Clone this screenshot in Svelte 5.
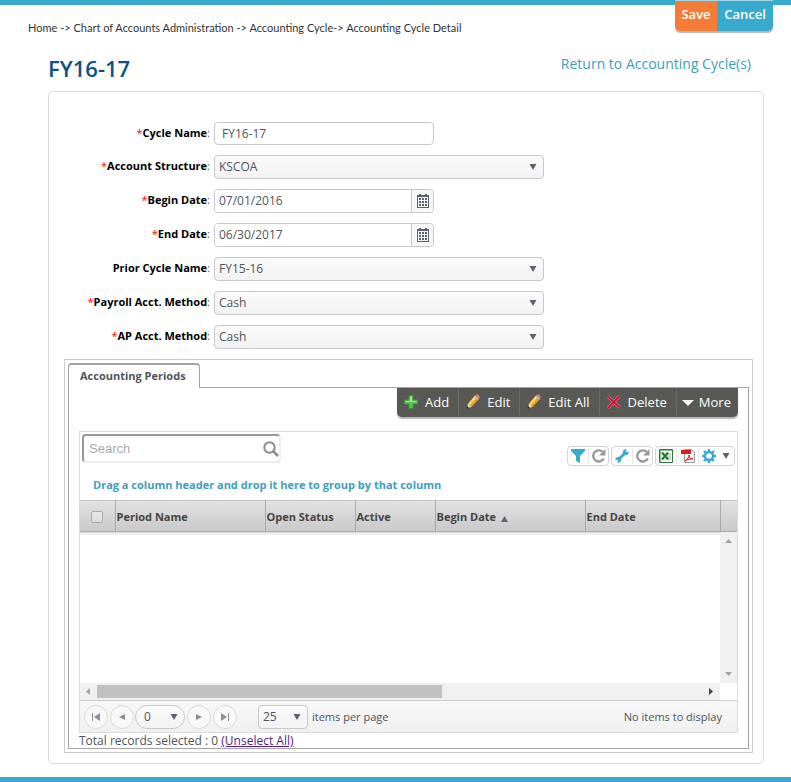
<script>
let search = $state("");
let selected = $state([]);

let cycle = $state({
  name: "FY16-17",
  structure: "KSCOA",
  begin: "07/01/2016",
  end: "06/30/2017",
  prior: "FY15-16",
  payroll: "Cash",
  ap: "Cash",
});

const fields = [
  { key: "name", label: "Cycle Name", type: "text", required: true },
  { key: "structure", label: "Account Structure", type: "select", required: true, options: ["KSCOA"] },
  { key: "begin", label: "Begin Date", type: "date", required: true },
  { key: "end", label: "End Date", type: "date", required: true },
  { key: "prior", label: "Prior Cycle Name", type: "select", required: false, options: ["FY15-16"] },
  { key: "payroll", label: "Payroll Acct. Method", type: "select", required: true, options: ["Cash", "Accrual"] },
  { key: "ap", label: "AP Acct. Method", type: "select", required: true, options: ["Cash", "Accrual"] },
];

const actions = [
  { name: "Add", icon: "plus" },
  { name: "Edit", icon: "pencil" },
  { name: "Edit All", icon: "pencil" },
  { name: "Delete", icon: "cross" },
  { name: "More", icon: "more" },
];

const columns = ["Period Name", "Open Status", "Active", "Begin Date", "End Date"];
</script>

{#snippet arrow()}
  <svg class="arrow" width="8" height="6" viewBox="0 0 8 6" aria-hidden="true">
    <path d="M0.5 0h7L4 6z" fill="#5b6271" />
  </svg>
{/snippet}

{#snippet actionIcon(name)}
  {#if name === "plus"}
    <svg width="16" height="16" viewBox="0 0 16 16" aria-hidden="true">
      <path d="M6 1.500h4V6h4.500v4H10v4.500H6V10H1.500V6H6z" fill="#5cc24f" stroke="#3c9c35" />
      <path d="M7 2.500h2V7h4.500v1H2.500V7H7z" fill="#a6e698" />
    </svg>
  {:else if name === "pencil"}
    <svg width="16" height="16" viewBox="0 0 16 16" aria-hidden="true">
      <path d="M2 14l1-4.500L6.500 13z" fill="#f7dfb4" />
      <path d="M3 9.500L9 2.500l4 3.500-6.500 7z" fill="#f0a020" />
      <path d="M3.500 9.500l6-7 1.500 1.500-6 7z" fill="#ffdf70" />
      <path d="M9 2.500l1-1.200 4 3.500-1 1.200z" fill="#c9ccd2" />
      <path d="M10 1.500l1-1h2l1.500 1.500v2L14 5z" fill="#e47a6c" />
      <path d="M1.500 14.500l.5-2.500L4 14z" fill="#222" />
    </svg>
  {:else if name === "cross"}
    <svg width="16" height="16" viewBox="0 0 16 16" aria-hidden="true">
      <path d="M2 2.500l11.500 11M13.500 2L2 14" stroke="#e9a5b2" stroke-width="3" fill="none" />
      <path d="M2 2.500l11.500 11M13.500 2L2 14" stroke="#d0122f" stroke-width="2" fill="none" />
    </svg>
  {:else}
    <svg width="12" height="16" viewBox="0 0 12 16" aria-hidden="true">
      <path d="M0 6h12L6 12z" fill="#fff" />
    </svg>
  {/if}
{/snippet}

{#snippet refreshIcon()}
  <svg width="16" height="16" viewBox="0 0 16 16" aria-hidden="true">
    <path d="M12 4.200A5.600 5.600 0 1 0 12.800 10.500" fill="none" stroke="#999" stroke-width="2.400" />
    <path d="M14.500 1V7.500H8z" fill="#999" />
  </svg>
{/snippet}

<div class="page">
  <header>
    <nav aria-label="Breadcrumb">
      <a href="#home">Home</a> -&gt; <a href="#coa">Chart of Accounts Administration</a> -&gt;
      <a href="#cycles">Accounting Cycle</a>-&gt; <span>Accounting Cycle Detail</span>
    </nav>
    <div class="page-buttons">
      <button class="save">Save</button>
      <button class="cancel">Cancel</button>
    </div>
  </header>

  <div class="title-row">
    <h1>{cycle.name}</h1>
    <a href="#return">Return to Accounting Cycle(s)</a>
  </div>

  <main>
    <form>
      {#each fields as field (field.key)}
        <label for={field.key}>
          {#if field.required}<span class="star">*</span>{/if}<strong>{field.label}</strong>:
        </label>
        {#if field.type === "text"}
          <input class="control short name" id={field.key} type="text" bind:value={cycle[field.key]} />
        {:else if field.type === "date"}
          <div class="control short date">
            <input id={field.key} type="text" bind:value={cycle[field.key]} />
            <button type="button" aria-label="Open the calendar">
              <svg width="12" height="14" viewBox="0 0 12 14" aria-hidden="true">
                <path fill="#5b6271" fill-rule="evenodd" d="M0 1h2V0h2v1h4V0h2v1h2v13H0zM1 3v10h10V3z" />
                <path
                  fill="#5b6271"
                  d="M2 4h2v2H2zM5 4h2v2H5zM8 4h2v2H8zM2 7h2v2H2zM5 7h2v2H5zM8 7h2v2H8zM2 10h2v2H2zM5 10h2v2H5zM8 10h2v2H8z"
                />
              </svg>
            </button>
          </div>
        {:else}
          <div class="picker">
            <select class="control" id={field.key} bind:value={cycle[field.key]}>
              {#each field.options as option}
                <option>{option}</option>
              {/each}
            </select>
            {@render arrow()}
          </div>
        {/if}
      {/each}
    </form>

    <section class="tabs">
      <div class="tab-strip">
        <button class="tab">Accounting Periods</button>
      </div>
      <div class="tab-body">
        <div class="toolbar">
          {#each actions as action (action.name)}
            <button class:more={action.icon === "more"}>
              {@render actionIcon(action.icon)}
              <span>{action.name}</span>
            </button>
          {/each}
        </div>

        <div class="grid">
          <div class="grid-top">
            <div class="search">
              <input type="text" placeholder="Search" aria-label="Search" bind:value={search} />
              <svg width="16" height="16" viewBox="0 0 16 16" aria-hidden="true">
                <circle cx="6.500" cy="6.500" r="5.200" fill="none" stroke="#8c8c90" stroke-width="2" />
                <path d="M10.500 10.500l4.500 4.500" stroke="#8c8c90" stroke-width="2.600" />
              </svg>
            </div>
            <div class="tools">
              <div class="tool-group">
                <button aria-label="Filter">
                  <svg width="16" height="16" viewBox="0 0 16 16" aria-hidden="true">
                    <path d="M1 1h14v2l-5 5v7l-4-2V8L1 3z" fill="#36abcd" />
                  </svg>
                </button>
                <button aria-label="Reset filter">{@render refreshIcon()}</button>
              </div>
              <div class="tool-group">
                <button aria-label="Settings">
                  <svg width="16" height="16" viewBox="0 0 16 16" aria-hidden="true">
                    <path d="M4.500 11.500l7-7" stroke="#36abcd" stroke-width="2.600" />
                    <path
                      d="M14.800 3.500l-2 .8-1.200-1.200.8-2a3.300 3.300 0 0 0-3.400 4.600l1.300 1.300a3.300 3.300 0 0 0 4.500-3.500zM1.200 12.500l2-.8 1.200 1.200-.8 2a3.300 3.300 0 0 0 3.400-4.600L5.700 9a3.300 3.300 0 0 0-4.500 3.500z"
                      fill="#36abcd"
                    />
                  </svg>
                </button>
                <button aria-label="Reset settings">{@render refreshIcon()}</button>
              </div>
              <div class="tool-group">
                <button aria-label="Export to Excel">
                  <svg width="16" height="16" viewBox="0 0 16 16" aria-hidden="true">
                    <path d="M1.500 1.500h13v13h-13z" fill="#fff" stroke="#2d7d3a" />
                    <path d="M2 2h12v1H2zM2 2h1v12H2z" fill="#8fbd8f" />
                    <path d="M9 5h4v7H9z" fill="#c5dcc4" />
                    <path d="M4 4.500l6 7M10 4.500l-6 7" stroke="#207a30" stroke-width="2.200" />
                  </svg>
                </button>
                <button class="pdf" aria-label="Export to PDF">
                  <svg width="16" height="16" viewBox="0 0 16 16" aria-hidden="true">
                    <path d="M4.500 1.500h7l3 3v10h-10z" fill="#f3f3f3" stroke="#999" />
                    <path d="M1 2h10v4H1z" fill="#d91c1c" />
                    <path d="M5 13c3-2 4-4 4-6 0 3 2 4 4 4-3 0-5 0-8 2z" fill="none" stroke="#d91c1c" />
                  </svg>
                </button>
                <button aria-label="Grid options">
                  <svg width="16" height="16" viewBox="0 0 16 16" aria-hidden="true">
                    <circle cx="8" cy="8" r="4" fill="none" stroke="#36abcd" stroke-width="2.400" />
                    <path
                      d="M8 1v2.500M8 12.500V15M1 8h2.500M12.500 8H15M3 3l2 2M11 11l2 2M3 13l2-2M11 5l2-2"
                      stroke="#36abcd"
                      stroke-width="2.400"
                    />
                  </svg>
                </button>
                <button class="drop" aria-label="More options">{@render arrow()}</button>
              </div>
            </div>
          </div>

          <p class="group-hint">Drag a column header and drop it here to group by that column</p>

          <table>
            <colgroup>
              <col class="c-check" />
              <col class="c-name" />
              <col class="c-status" />
              <col class="c-active" />
              <col class="c-begin" />
              <col />
              <col class="c-scroll" />
            </colgroup>
            <thead>
              <tr>
                <th class="check"><input type="checkbox" aria-label="Select all" /></th>
                {#each columns as column}
                  <th>
                    {column}
                    {#if column === "Begin Date"}
                      <svg width="7" height="6" viewBox="0 0 7 6" aria-hidden="true">
                        <path d="M0 6h7L3.500 0z" fill="#5b6271" />
                      </svg>
                    {/if}
                  </th>
                {/each}
                <th></th>
              </tr>
            </thead>
          </table>

          <div class="viewport">
            <div class="rows"></div>
            <div class="bar vertical">
              <svg width="7" height="4" viewBox="0 0 7 4"><path d="M0 4h7L3.500 0z" fill="#a3a3a3" /></svg>
              <svg width="7" height="4" viewBox="0 0 7 4"><path d="M0 0h7L3.500 4z" fill="#a3a3a3" /></svg>
            </div>
            <div class="bar horizontal">
              <svg width="4" height="7" viewBox="0 0 4 7"><path d="M4 0v7L0 3.500z" fill="#a3a3a3" /></svg>
              <div class="track"><div class="thumb"></div></div>
              <svg width="4" height="7" viewBox="0 0 4 7"><path d="M0 0v7l4-3.500z" fill="#444" /></svg>
            </div>
          </div>

          <div class="pager">
            <button class="round" aria-label="First page">
              <svg width="8" height="8" viewBox="0 0 8 8"><path d="M0 0h1v8H0zM8 0v8L2 4z" fill="#8a8f9b" /></svg>
            </button>
            <button class="round" aria-label="Previous page">
              <svg width="6" height="8" viewBox="0 0 6 8"><path d="M6 1v6L0 4z" fill="#8a8f9b" /></svg>
            </button>
            <div class="picker page-number">
              <select class="control" aria-label="Page"><option>0</option></select>
              {@render arrow()}
            </div>
            <button class="round" aria-label="Next page">
              <svg width="6" height="8" viewBox="0 0 6 8"><path d="M0 1v6l6-3z" fill="#8a8f9b" /></svg>
            </button>
            <button class="round" aria-label="Last page">
              <svg width="8" height="8" viewBox="0 0 8 8"><path d="M7 0h1v8H7zM0 0v8l6-4z" fill="#8a8f9b" /></svg>
            </button>
            <div class="picker page-size">
              <select class="control" id="page-size"><option>25</option><option>50</option></select>
              {@render arrow()}
            </div>
            <label for="page-size">items per page</label>
            <span class="count">No items to display</span>
          </div>
        </div>

        <div class="total">
          Total records selected : {selected.length}
          <a href="#unselect" onclick={() => (selected = [])}>(Unselect All)</a>
        </div>
      </div>
    </section>
  </main>
</div>

<style>
  :global(body) {
    margin: 0;
    background: #fff;
  }

  .page {
    box-sizing: border-box;
    min-height: 100vh;
    border-bottom: 5px solid #36abcd;
    padding-bottom: 13px;
    font-family: "Open Sans", "Noto Sans", sans-serif;
    font-size: 11px;
    line-height: 16px;
    color: #50545c;
  }

  .page :global(*) {
    box-sizing: border-box;
  }

  button,
  input,
  select {
    margin: 0;
    font: inherit;
    color: inherit;
  }

  button {
    padding: 0;
    border: 0;
    background: none;
    cursor: pointer;
  }

  svg {
    display: block;
    flex: none;
  }

  header {
    display: flex;
    justify-content: space-between;
    align-items: flex-start;
    height: 50px;
    padding: 0 18px 0 28px;
    background: linear-gradient(#36abcd 5px, transparent 5px);
  }

  nav {
    padding-top: 20px;
    font-family: Lato, "Open Sans", sans-serif;
    font-size: 11px;
    color: #333;
  }

  nav a {
    color: inherit;
    text-decoration: none;
  }

  .page-buttons {
    display: flex;
    height: 31px;
    border-radius: 0 0 5px 5px;
    box-shadow: 0 2px 1px #b5b5b5;
    overflow: hidden;
    font-size: 13px;
    font-weight: 600;
    color: #fff;
  }

  .page-buttons button {
    padding-bottom: 4px;
    border-top: 1px solid #9fd5e6;
  }

  .save {
    width: 42px;
    background: #f47c36;
  }

  .cancel {
    width: 56px;
    background: #36abcd;
  }

  .title-row {
    display: flex;
    justify-content: space-between;
    align-items: flex-start;
    height: 41px;
    padding: 0 40px 0 48px;
  }

  h1 {
    margin: 3px 0 0;
    font-size: 22px;
    line-height: 30px;
    font-weight: 600;
    color: #0a5288;
  }

  .title-row a {
    padding-top: 6px;
    font-size: 14px;
    color: #3a9fc0;
    text-decoration: none;
  }

  main {
    margin: 0 27px 0 48px;
    padding: 30px 10px 10px 15px;
    border: 1px solid #d9d9d9;
    border-radius: 5px;
  }

  form {
    display: grid;
    grid-template-columns: 146px 330px;
    gap: 10px 4px;
    padding-bottom: 10px;
  }

  form label {
    padding-top: 3px;
    text-align: right;
    white-space: nowrap;
  }

  strong {
    color: #000;
    font-weight: 700;
  }

  .star {
    color: #f00;
  }

  .control {
    height: 24px;
    padding: 0 4px;
    border: 1px solid #c8c8cc;
    border-radius: 4px;
    background: #fff;
    font-size: 12px;
  }

  input.name {
    height: 23px;
    padding: 0 7px;
  }

  .short {
    width: 220px;
  }

  .date {
    display: flex;
    padding: 0;
    overflow: hidden;
  }

  .date input {
    flex: 1;
    min-width: 0;
    padding: 0 4px;
    border: 0;
  }

  .date button {
    display: flex;
    align-items: center;
    justify-content: center;
    width: 22px;
    border-left: 1px solid #c8c8cc;
    background: #f7f7f7;
  }

  .picker {
    display: grid;
    align-items: center;
  }

  .picker > select {
    grid-area: 1 / 1;
    width: 100%;
    appearance: none;
    background: linear-gradient(#fbfbfb, #f2f2f2);
  }

  .picker > :global(svg) {
    grid-area: 1 / 1;
    justify-self: end;
    margin-right: 7px;
    pointer-events: none;
  }

  .tabs {
    padding: 3px;
    border: 1px solid #ccc;
  }

  .tab-strip {
    display: flex;
  }

  .tab {
    height: 25px;
    margin-bottom: -1px;
    padding: 0 13px 2px 11px;
    border: 1px solid #a2a2a6;
    border-top-width: 2px;
    border-bottom: 0;
    border-radius: 4px 4px 0 0;
    background: #fff;
    font-weight: 700;
    z-index: 1;
  }

  .tab-body {
    padding: 0 10px;
    border: 1px solid #a2a2a6;
  }

  .toolbar {
    display: flex;
    width: fit-content;
    height: 29px;
    margin: 0 0 14px auto;
    border-radius: 0 0 5px 5px;
    background: #585854;
    box-shadow: 0 2px 1px #b5b5b5;
    font-size: 13px;
    color: #fff;
  }

  .toolbar button {
    display: flex;
    align-items: center;
    gap: 6px;
    height: 27px;
    padding: 0 9px 0 6px;
  }

  .toolbar button + button {
    border-left: 1px solid #6b6b67;
  }

  .toolbar .more {
    gap: 5px;
    padding: 0 7px 0 5px;
  }

  .grid {
    border: 1px solid #dcdcdc;
  }

  .grid-top {
    display: flex;
    justify-content: space-between;
    align-items: flex-start;
    padding: 2px 2px 0;
  }

  .search {
    display: flex;
    align-items: center;
    width: 199px;
    height: 29px;
    border: 2px solid #ededed;
    border-top-color: #999;
    border-left-color: #999;
    border-radius: 4px;
  }

  .search input {
    flex: 1;
    min-width: 0;
    padding: 0 5px;
    border: 0;
    outline: 0;
    background: none;
    font-family: "Liberation Sans", Arial, sans-serif;
    font-size: 13px;
  }

  .search input::placeholder {
    color: #a9a9a9;
  }

  .tools {
    display: flex;
    gap: 2px;
    padding-top: 12px;
  }

  .tool-group {
    display: flex;
    align-items: center;
    height: 20px;
    border: 1px solid #d3d3d3;
    border-radius: 4px;
  }

  .tool-group button {
    display: flex;
    align-items: center;
    justify-content: center;
    width: 20px;
    height: 16px;
  }

  .tool-group button + button {
    border-left: 1px solid #e6e6e6;
  }

  .tool-group .pdf {
    width: 22px;
  }

  .tool-group .drop {
    width: 16px;
    border-left: 0;
  }

  .group-hint {
    margin: 0;
    padding: 11px 13px 7px;
    font-weight: 700;
    color: #3a9fc0;
  }

  table {
    width: 100%;
    height: 32px;
    border-collapse: collapse;
    table-layout: fixed;
    border-top: 1px solid #c4c4c8;
    border-bottom: 1px solid #aaa;
    background: linear-gradient(#e2e2e2, #c9c9c9);
    box-shadow: 0 2px 2px #ddd;
  }

  .c-check {
    width: 35px;
  }

  .c-name,
  .c-begin {
    width: 150px;
  }

  .c-status {
    width: 90px;
  }

  .c-active {
    width: 80px;
  }

  .c-scroll {
    width: 17px;
  }

  th {
    padding: 2px 1px 0;
    text-align: left;
    font-weight: 700;
    color: #444;
    white-space: nowrap;
  }

  th + th {
    border-left: 1px solid #aaa;
  }

  th svg {
    display: inline;
    margin-left: 2px;
    vertical-align: -1px;
  }

  th.check {
    text-align: center;
    line-height: 0;
  }

  .check input {
    appearance: none;
    width: 12px;
    height: 12px;
    border: 1px solid #aaa;
    border-radius: 2px;
    background: linear-gradient(#e8e8e8, #dcdcdc);
  }

  .viewport {
    display: grid;
    grid-template: 151px 17px / 1fr 17px;
  }

  .bar {
    display: flex;
    align-items: center;
    justify-content: space-between;
    background: #f0f0f0;
  }

  .vertical {
    flex-direction: column;
    padding: 7px 0;
  }

  .horizontal {
    padding: 0 7px 0 6px;
  }

  .track {
    flex: 1;
    padding: 0 7px;
  }

  .thumb {
    width: 57%;
    height: 13px;
    background: #c1c1c1;
  }

  .pager {
    display: flex;
    align-items: center;
    height: 32px;
    padding: 0 15px 0 4px;
    border-top: 1px solid #ccc;
    background: linear-gradient(#f8f8f8, #f0f0f0);
  }

  .round {
    display: flex;
    align-items: center;
    justify-content: center;
    width: 24px;
    height: 24px;
    margin-right: 2px;
    border: 1px solid #d9d9d9;
    border-radius: 50%;
    background: #f8f8f8;
  }

  .page-number {
    width: 50px;
    margin: 0 2px 0 -1px;
  }

  .page-number .control {
    padding: 0 8px;
    border-radius: 12px;
  }

  .page-size {
    width: 50px;
    margin: 0 4px 0 19px;
  }

  .count {
    margin-left: auto;
  }

  .total {
    font-size: 12px;
    line-height: 15px;
  }

  .total a {
    color: #551a8b;
  }
</style>
